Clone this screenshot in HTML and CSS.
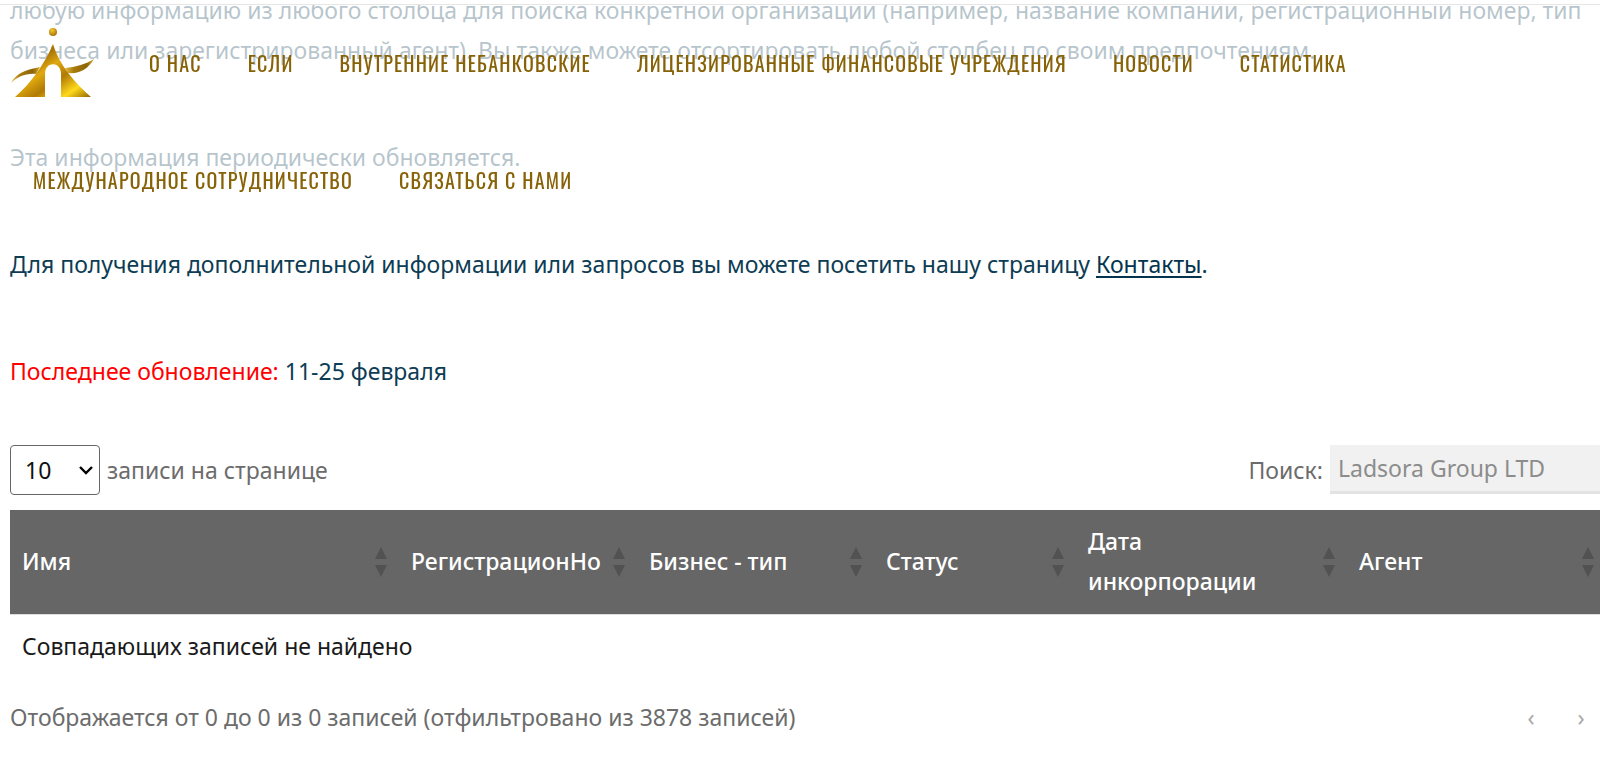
FILE: index.html
```html
<!DOCTYPE html>
<html lang="ru">
<head>
  <meta charset="UTF-8">
  <meta name="viewport" content="width=device-width, initial-scale=1">
  <title>Реестр компаний</title>
  <link rel="stylesheet" href="styles.css">
</head>
<body>
  <header class="site-header">
    <nav class="menu">
      <a class="logo" href="#" aria-label="Главная">
        <svg width="84" height="80" viewBox="0 0 84 80">
          <defs>
            <linearGradient id="gold" x1="0" y1="0" x2="1" y2="1">
              <stop offset="0" stop-color="#d9a514"/>
              <stop offset="0.3" stop-color="#a87408"/>
              <stop offset="0.45" stop-color="#e0a90f"/>
              <stop offset="0.62" stop-color="#b07a05"/>
              <stop offset="0.82" stop-color="#ffd91c"/>
              <stop offset="1" stop-color="#8f6203"/>
            </linearGradient>
            <linearGradient id="wing" x1="0" y1="0" x2="1" y2="0">
              <stop offset="0" stop-color="#e3bd3b"/>
              <stop offset="0.3" stop-color="#a97a0a"/>
              <stop offset="0.75" stop-color="#8c6407"/>
              <stop offset="1" stop-color="#d5ab2c"/>
            </linearGradient>
            <radialGradient id="ball" cx="0.4" cy="0.3" r="0.7">
              <stop offset="0" stop-color="#f7c92c"/>
              <stop offset="1" stop-color="#a87205"/>
            </radialGradient>
          </defs>
          <path fill="url(#wing)" d="M1 60C6 51 14 47 30 44L26 51C16 50 7 54 1 60Z"/>
          <path fill="url(#wing)" d="M55 45C66 44 76 41 84 36C78 46 70 51 58 50Z"/>
          <path fill="url(#gold)" d="M43 21C46 31 52 42 59 51C66 60 73 67 81 74H51V51C51 38 35 38 35 51V74H5C13 67 20 59 26 51C33 41 39 31 43 21Z"/>
          <circle cx="43" cy="9" r="4" fill="url(#ball)"/>
        </svg>
      </a>
      <a href="#">О нас</a>
      <a href="#">Если</a>
      <a href="#">Внутренние небанковские</a>
      <a href="#">Лицензированные финансовые учреждения</a>
      <a href="#">Новости</a>
      <a href="#">Статистика</a>
    </nav>
    <nav class="menu menu-second">
      <a href="#">Международное сотрудничество</a>
      <a href="#">Связаться с нами</a>
    </nav>
  </header>

  <main class="content">
    <p>любую информацию из любого столбца для поиска конкретной организации (например, название компании, регистрационный номер, тип бизнеса или зарегистрированный агент). Вы также можете отсортировать любой столбец по своим предпочтениям.</p>
    <p>Эта информация периодически обновляется.</p>
    <p>Для получения дополнительной информации или запросов вы можете посетить нашу страницу <a href="#">Контакты</a>.</p>
    <p><span class="red">Последнее обновление:</span> 11-25 февраля</p>

    <div class="registry">
      <div class="controls">
        <div class="length">
          <select id="pageSize">
            <option>10</option>
            <option>25</option>
            <option>50</option>
            <option>100</option>
          </select>
          <label for="pageSize">записи на странице</label>
        </div>
        <div class="search">
          <label for="search">Поиск:</label>
          <input type="search" id="search" value="Ladsora Group LTD">
        </div>
      </div>

      <table class="companies">
        <colgroup>
          <col class="col-name">
          <col class="col-number">
          <col class="col-type">
          <col class="col-status">
          <col class="col-date">
          <col class="col-agent">
        </colgroup>
        <thead>
          <tr>
            <th>Имя</th>
            <th>РегистрационНо</th>
            <th>Бизнес - тип</th>
            <th>Статус</th>
            <th>Дата инкорпорации</th>
            <th>Агент</th>
          </tr>
        </thead>
        <tbody>
          <tr>
            <td colspan="6">Совпадающих записей не найдено</td>
          </tr>
        </tbody>
      </table>

      <div class="table-footer">
        <span>Отображается от 0 до 0 из 0 записей (отфильтровано из 3878 записей)</span>
        <div class="pager">
          <button type="button" aria-label="Назад" disabled>‹</button>
          <button type="button" aria-label="Вперёд" disabled>›</button>
        </div>
      </div>
    </div>
  </main>
</body>
</html>
```
FILE: styles.css
```css
* {
  box-sizing: border-box;
}

body {
  margin: 0;
  overflow: hidden;
  background: #fff;
  color: #0d3c54;
  font-family: "Noto Sans", "Open Sans", sans-serif;
  font-size: 23px;
  font-weight: 400;
  line-height: 40px;
}

/* header lies over the scrolled text */
.site-header {
  position: fixed;
  top: 0;
  left: 0;
  right: 0;
  border-top: 4px solid #fff;
  background: rgba(255, 255, 255, 0.7);
  box-shadow: inset 0 1px 0 #e6e6e6;
}

.menu {
  display: flex;
  align-items: center;
  gap: 46px;
  height: 117px;
  padding-left: 10px;
}

.menu a {
  color: #876206;
  font-family: Oswald, "Liberation Sans Narrow", sans-serif;
  font-size: 20px;
  font-weight: 400;
  letter-spacing: 0.06em;
  text-decoration: none;
  text-transform: uppercase;
  white-space: nowrap;
}

.menu .logo {
  display: flex;
  margin-right: 9px;
}

.menu-second {
  padding-left: 33px;
}

.content {
  margin: -10px 0 0;
  padding-left: 10px;
}

.content p {
  margin: 0 0 67px;
  padding-right: 10px;
}

.content p a {
  color: #04344d;
  text-underline-offset: 3px;
}

.red {
  color: #f00;
}

/* the table is a little wider than the window */
.registry {
  margin-top: -13px;
  margin-right: -6px;
  color: #6c6c6c;
}

.controls {
  display: flex;
  justify-content: space-between;
  margin-bottom: 15px;
}

.length,
.search {
  display: flex;
  align-items: center;
  gap: 7px;
}

.length select {
  width: 90px;
  height: 50px;
  padding: 0 14px;
  border: 1px solid #666;
  border-radius: 4px;
  appearance: none;
  background: #fff url("data:image/svg+xml,%3Csvg xmlns='http://www.w3.org/2000/svg' width='14' height='10'%3E%3Cpath d='M1 2l6 6 6-6' fill='none' stroke='%23000' stroke-width='2.4'/%3E%3C/svg%3E") no-repeat right 6px center;
  color: #111;
  font: inherit;
}

.search {
  align-self: flex-start;
}

.search input {
  width: 276px;
  height: 49px;
  padding: 0 8px;
  border: 0;
  border-bottom: 3px solid #e3e3e3;
  background: #f1f1f1;
  color: #8c8c8c;
  font: inherit;
}

.companies {
  width: 100%;
  table-layout: fixed;
  border-collapse: collapse;
}

.col-name { width: 389px; }
.col-number { width: 238px; }
.col-type { width: 237px; }
.col-status { width: 202px; }
.col-date { width: 271px; }

.companies th {
  position: relative;
  height: 104px;
  padding: 11px 34px 12px 12px;
  border-bottom: 1px solid #ddd;
  background: #666;
  color: #fff;
  font-weight: 500;
  text-align: left;
}

/* sort arrows */
.companies th::before,
.companies th::after {
  content: "";
  position: absolute;
  right: 12px;
  border: 6px solid transparent;
}

.companies th::before {
  top: 37px;
  border-top: 0;
  border-bottom: 12px solid #525252;
}

.companies th::after {
  top: 55px;
  border-bottom: 0;
  border-top: 12px solid #525252;
}

.companies td {
  padding: 11px 12px 12px;
  color: #1a1a1a;
}

.table-footer {
  display: flex;
  justify-content: space-between;
  align-items: center;
  margin-top: 19px;
}

.pager {
  display: flex;
  gap: 10px;
  padding-right: 5px;
}

.pager button {
  width: 40px;
  padding: 0;
  border: 0;
  background: none;
  color: #aaa;
  font: inherit;
}
```
